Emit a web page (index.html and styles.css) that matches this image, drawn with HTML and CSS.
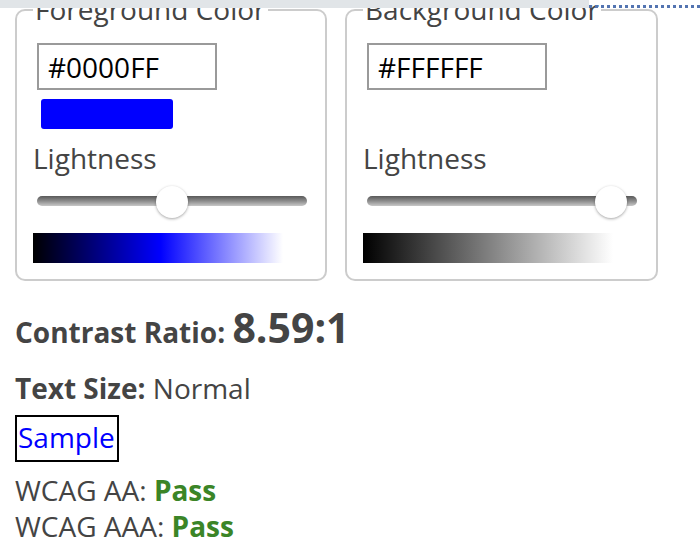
FILE: index.html
```html
<!DOCTYPE html>
<html lang="en">
<head>
<meta charset="utf-8">
<title>Contrast Checker</title>
<link rel="stylesheet" href="styles.css">
</head>
<body>
<div class="topbar"><div class="topbar-fill"></div><div class="topbar-dots"></div></div>
<main class="page">
  <div class="pickers">
    <fieldset class="picker">
      <legend>Foreground Color</legend>
      <input class="hex" type="text" value="#0000FF">
      <div class="swatch swatch-blue"></div>
      <label class="lbl">Lightness</label>
      <input class="range" type="range" min="0" max="100" value="50">
      <div class="grad grad-blue"></div>
    </fieldset>
    <fieldset class="picker">
      <legend>Background Color</legend>
      <input class="hex" type="text" value="#FFFFFF">
      <div class="swatch swatch-white"></div>
      <label class="lbl">Lightness</label>
      <input class="range" type="range" min="0" max="100" value="96">
      <div class="grad grad-gray"></div>
    </fieldset>
  </div>
  <p class="ratio"><strong>Contrast Ratio:</strong> <span class="num">8.59:1</span></p>
  <p class="line size"><strong>Text Size:</strong> Normal</p>
  <div class="sample">Sample</div>
  <p class="line wcag">WCAG AA: <strong class="pass">Pass</strong></p>
  <p class="line wcag2">WCAG AAA: <strong class="pass">Pass</strong></p>
</main>
</body>
</html>
```
FILE: styles.css
```css
* { box-sizing: border-box; }
html, body { margin: 0; padding: 0; background: #fff; }
body {
  font-family: "Open Sans", "DejaVu Sans", sans-serif;
  font-size: 28px;
  color: #444;
  overflow: hidden;
}
.topbar {
  position: fixed;
  top: 0; left: 0; right: 0;
  height: 8px;
  display: flex;
  z-index: 5;
}
.topbar-fill { width: 589px; height: 8px; background: #e1e5e8; }
.topbar-dots {
  flex: 1;
  margin-top: 5px;
  height: 3px;
  background: repeating-linear-gradient(to right, #5374b1 0 3px, transparent 3px 6px);
}
.page { margin-top: -9px; padding: 0 15px; }
.pickers { display: flex; gap: 18px; }
.picker {
  margin: 0;
  width: 312px;
  min-width: 0;
  border: 2px solid #ccc;
  border-radius: 10px;
  padding: 0 16px 16px;
}
.picker + .picker { width: 313px; }
legend { padding: 0 2px; line-height: 37px; color: #444; }
.hex {
  display: block;
  margin: 15px 0 0 4px;
  width: 180px;
  height: 47px;
  border: 2px solid #9a9a9a;
  padding: 0 9px;
  font: inherit;
  color: #000;
  background: #fff;
  outline: none;
}
.swatch { margin: 9px 0 0 8px; width: 132px; height: 30px; border-radius: 3px; }
.swatch-blue { background: #0000ff; }
.swatch-white { background: #fff; }
.lbl { display: block; margin-top: 11px; line-height: 37px; }
.range {
  -webkit-appearance: none;
  appearance: none;
  display: block;
  background: transparent;
  width: 270px;
  height: 32px;
  margin: 8px 0 0 4px;
  padding: 0;
}
.range::-webkit-slider-runnable-track {
  height: 10px;
  border-radius: 5px;
  background: linear-gradient(#595959, #8c8c8c 50%, #c8c8c8);
}
.range::-webkit-slider-thumb {
  -webkit-appearance: none;
  width: 32px;
  height: 32px;
  border-radius: 50%;
  background: #fff;
  box-shadow: 0 1px 3px rgba(0,0,0,0.35);
  margin-top: -10px;
}
.grad { margin-top: 16px; width: 250px; height: 30px; }
.grad-blue { background: linear-gradient(to right, #000, #0000ff 51%, #fff); }
.grad-gray { background: linear-gradient(to right, #000, #fff); }
p { margin: 0; }
.ratio { margin-top: 20px; line-height: 52px; }
.num { font-size: 41px; font-weight: 700; }
strong { font-weight: 700; }
.line { line-height: 37px; }
.size { margin-top: 12px; }
.sample {
  display: inline-block;
  margin-top: 8px;
  border: 2px solid #000;
  padding: 2px 2px 4px 1px;
  line-height: 37px;
  color: #0000ff;
}
.wcag { margin-top: 10px; line-height: 36px; }
.wcag2 { line-height: 36px; }
.pass { color: #3b8527; }
```
